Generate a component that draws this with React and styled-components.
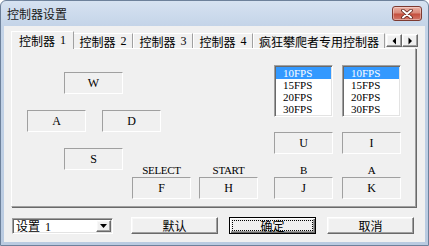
import React from 'react';
import styled, { createGlobalStyle, css } from 'styled-components';

const GlobalStyle = createGlobalStyle`
  html, body {
    margin: 0;
    padding: 0;
    background: #ffffff;
  }
  body {
    font-family: "Noto Sans CJK SC", sans-serif;
    color: #000;
  }
`;

const raised = css`
  border: 1px solid;
  border-color: #ffffff #696969 #696969 #ffffff;
  box-shadow: inset -1px -1px 0 #a0a0a0, inset 1px 1px 0 #f8f8f8;
`;

const sunken = css`
  border: 1px solid;
  border-color: #a0a0a0 #ffffff #ffffff #a0a0a0;
  box-shadow: inset 1px 1px 0 #696969, inset -1px -1px 0 #e3e3e3;
`;

const latinText = css`
  font-family: "Liberation Serif", "Noto Sans CJK SC", serif;
  font-size: 11px;
`;

const Window = styled.div`
  width: 429px;
  height: 246px;
  box-sizing: border-box;
  display: flex;
  flex-direction: column;
  border: 1px solid #6d819b;
  border-radius: 6px 6px 0 0;
  background: linear-gradient(#d6e2f1 0px, #c4d4e8 25px, #bacbe1 100%);
  padding: 0 3px 3px 3px;
  overflow: hidden;
`;

const TitleBar = styled.div`
  height: 25px;
  flex-shrink: 0;
  display: flex;
  justify-content: space-between;
  align-items: flex-start;
  padding-left: 3px;
`;

const Title = styled.div`
  font-size: 12px;
  line-height: 25px;
  color: #1a1a1a;
`;

const CloseButton = styled.div`
  width: 30px;
  height: 15px;
  margin-top: 5px;
  margin-right: 3px;
  box-sizing: border-box;
  border: 1px solid #7d3a30;
  border-radius: 3px;
  background: linear-gradient(#ebb0a4 0%, #d98a7a 45%, #c5503e 55%, #d2786a 100%);
  box-shadow: inset 0 0 0 1px rgba(255, 255, 255, 0.35);
  display: flex;
  align-items: center;
  justify-content: center;
`;

const Client = styled.div`
  flex: 1;
  background: #f0f0f0;
  display: flex;
  flex-direction: column;
  padding-left: 7px;
`;

const TabStrip = styled.div`
  margin-top: 5px;
  height: 17px;
  display: flex;
  align-items: flex-end;
  padding-left: 2px;
  position: relative;
  z-index: 1;
`;

const Tab = styled.div`
  width: ${(p) => p.$w}px;
  height: 15px;
  box-sizing: border-box;
  flex-shrink: 0;
  border-top: 1px solid #ffffff;
  border-left: 1px solid #ffffff;
  border-right: 1px solid #a0a0a0;
  background: #f0f0f0;
  display: flex;
  align-items: center;
  justify-content: center;
  font-size: 12px;
  white-space: nowrap;
  ${(p) =>
    p.$active &&
    css`
      height: 18px;
      width: ${p.$w + 3}px;
      margin: 0 -1px -1px -2px;
      position: relative;
      z-index: 2;
      padding-bottom: 1px;
    `}
`;

const Digit = styled.span`
  font-family: "Liberation Serif", serif;
  font-size: 12px;
  margin-left: 5px;
`;

const Spin = styled.div`
  display: flex;
  margin-left: 1px;
  margin-bottom: 1px;
`;

const SpinButton = styled.div`
  width: 16px;
  height: 13px;
  box-sizing: border-box;
  ${raised};
  background: #f0f0f0;
  display: flex;
  align-items: center;
  justify-content: center;
`;

const Panel = styled.div`
  width: 405px;
  height: 159px;
  box-sizing: border-box;
  border: 1px solid;
  border-color: #ffffff #a0a0a0 #a0a0a0 #ffffff;
  box-shadow: 1px 1px 0 #696969;
  padding: 16px 0 0 15px;
  display: grid;
  grid-template-columns: 37px 22px 16px 21px 9px 29px 30px 8px 59px 16px 59px 9px 59px;
  grid-template-rows: 7px 22px 16px 7px 15px 16px 6px 9px 7px 7px 22px;
  align-content: start;
  justify-content: start;
`;

const KeyBox = styled.div`
  grid-column: ${(p) => p.$col};
  grid-row: ${(p) => p.$row};
  box-sizing: border-box;
  border: 1px solid;
  border-color: #a0a0a0 #ffffff #ffffff #a0a0a0;
  display: flex;
  align-items: center;
  justify-content: center;
  ${latinText};
  font-size: 12px;
`;

const KeyLabel = styled.div`
  grid-column: ${(p) => p.$col};
  grid-row: 9 / 11;
  display: flex;
  align-items: center;
  justify-content: center;
  ${latinText};
  letter-spacing: -0.3px;
`;

const ListBox = styled.div`
  grid-column: ${(p) => p.$col};
  grid-row: 1 / 5;
  box-sizing: border-box;
  ${sunken};
  padding: 1px;
  background: #ffffff;
  display: flex;
  flex-direction: column;
`;

const ListItem = styled.div`
  height: 12px;
  line-height: 12px;
  padding-left: 7px;
  ${latinText};
  background: ${(p) => (p.$selected ? '#3399ff' : 'transparent')};
  color: ${(p) => (p.$selected ? '#ffffff' : '#000000')};
`;

const BottomRow = styled.div`
  margin-top: 10px;
  display: flex;
  align-items: flex-start;
`;

const Combo = styled.div`
  width: 101px;
  height: 16px;
  margin-top: 1px;
  margin-left: 1px;
  box-sizing: border-box;
  ${sunken};
  padding: 1px;
  background: #ffffff;
  display: flex;
  align-items: center;
`;

const ComboText = styled.div`
  flex: 1;
  padding-left: 2px;
  font-size: 12px;
  line-height: 12px;
`;

const ComboArrow = styled.div`
  width: 15px;
  height: 12px;
  box-sizing: border-box;
  ${raised};
  background: #f0f0f0;
  display: flex;
  align-items: center;
  justify-content: center;
`;

const Button = styled.div`
  width: 87px;
  height: 17px;
  margin-left: ${(p) => p.$gap}px;
  box-sizing: border-box;
  background: #f0f0f0;
  padding: 2px;
  display: flex;
  ${(p) =>
    p.$default
      ? css`
          border: 1px solid #000000;
          box-shadow: inset 1px 1px 0 #ffffff, inset -1px -1px 0 #696969, inset -2px -2px 0 #a0a0a0;
        `
      : raised}
`;

const ButtonFace = styled.div`
  flex: 1;
  box-sizing: border-box;
  border: 1px dotted ${(p) => (p.$focus ? '#000000' : 'transparent')};
  display: flex;
  align-items: center;
  justify-content: center;
  font-size: 12px;
  line-height: 11px;
`;

const Triangle = ({ dir }) => {
  const points = {
    left: '4,0.5 4,7.5 0.5,4',
    right: '0.5,0.5 0.5,7.5 4,4',
    down: '0,0 7,0 3.5,4',
  }[dir];
  const size = dir === 'down' ? [7, 4] : [5, 8];
  return (
    <svg width={size[0]} height={size[1]} viewBox={`0 0 ${size[0]} ${size[1]}`}>
      <polygon points={points} fill="#000" />
    </svg>
  );
};

const CloseIcon = () => (
  <svg width="12" height="10" viewBox="0 0 12 10">
    <path d="M2 1.5 L10 8.5 M10 1.5 L2 8.5" stroke="#5b2119" strokeWidth="3.6" strokeLinecap="round" />
    <path d="M2 1.5 L10 8.5 M10 1.5 L2 8.5" stroke="#ffffff" strokeWidth="2" strokeLinecap="round" />
  </svg>
);

const tabs = [
  { name: '控制器', num: '1', w: 60 },
  { name: '控制器', num: '2', w: 60 },
  { name: '控制器', num: '3', w: 60 },
  { name: '控制器', num: '4', w: 60 },
  { name: '疯狂攀爬者专用控制器', w: 132 },
];

const fps = ['10FPS', '15FPS', '20FPS', '30FPS'];

const keys = [
  { k: 'W', col: '2 / 5', row: '2 / 3' },
  { k: 'A', col: '1 / 3', row: '4 / 6' },
  { k: 'D', col: '4 / 7', row: '4 / 6' },
  { k: 'S', col: '2 / 5', row: '7 / 10' },
  { k: 'U', col: '11 / 12', row: '6 / 8' },
  { k: 'I', col: '13 / 14', row: '6 / 8' },
  { k: 'F', col: '6 / 8', row: '11 / 12' },
  { k: 'H', col: '9 / 10', row: '11 / 12' },
  { k: 'J', col: '11 / 12', row: '11 / 12' },
  { k: 'K', col: '13 / 14', row: '11 / 12' },
];

const labels = [
  { t: 'SELECT', col: '6 / 8' },
  { t: 'START', col: '9 / 10' },
  { t: 'B', col: '11 / 12' },
  { t: 'A', col: '13 / 14' },
];

export default function App() {
  return (
    <>
      <GlobalStyle />
      <Window>
        <TitleBar>
          <Title>控制器设置</Title>
          <CloseButton>
            <CloseIcon />
          </CloseButton>
        </TitleBar>
        <Client>
          <TabStrip>
            {tabs.map((t, i) => (
              <Tab key={i} $w={t.w} $active={i === 0}>
                {t.name}
                {t.num && <Digit>{t.num}</Digit>}
              </Tab>
            ))}
            <Spin>
              <SpinButton>
                <Triangle dir="left" />
              </SpinButton>
              <SpinButton>
                <Triangle dir="right" />
              </SpinButton>
            </Spin>
          </TabStrip>
          <Panel>
            <ListBox $col="11 / 12">
              {fps.map((f, i) => (
                <ListItem key={f} $selected={i === 0}>{f}</ListItem>
              ))}
            </ListBox>
            <ListBox $col="13 / 14">
              {fps.map((f, i) => (
                <ListItem key={f} $selected={i === 0}>{f}</ListItem>
              ))}
            </ListBox>
            {keys.map((k) => (
              <KeyBox key={k.k} $col={k.col} $row={k.row}>{k.k}</KeyBox>
            ))}
            {labels.map((l) => (
              <KeyLabel key={l.t} $col={l.col}>{l.t}</KeyLabel>
            ))}
          </Panel>
          <BottomRow>
            <Combo>
              <ComboText>
                设置<Digit>1</Digit>
              </ComboText>
              <ComboArrow>
                <Triangle dir="down" />
              </ComboArrow>
            </Combo>
            <Button $gap={18}>
              <ButtonFace>默认</ButtonFace>
            </Button>
            <Button $gap={11} $default>
              <ButtonFace $focus>确定</ButtonFace>
            </Button>
            <Button $gap={11}>
              <ButtonFace>取消</ButtonFace>
            </Button>
          </BottomRow>
        </Client>
      </Window>
    </>
  );
}
